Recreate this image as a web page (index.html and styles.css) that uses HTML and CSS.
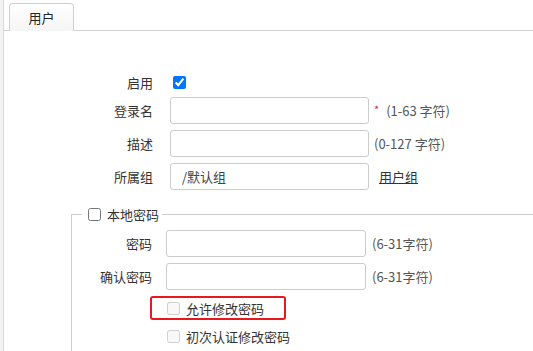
FILE: index.html
```html
<!DOCTYPE html>
<html>
<head>
    <title>用户</title>
    <link rel="stylesheet" href="styles.css">
</head>
<body>
    <div class="panel">
        <div class="tabs">
            <div class="tab">用户</div>
        </div>

        <form class="user-form">
            <div class="row check-row">
                <label class="lbl">启用</label>
                <input type="checkbox" class="chk" checked>
            </div>
            <div class="row">
                <label class="lbl">登录名</label>
                <input type="text" class="text">
                <span class="hint"><span class="req">*</span>(1-63 字符)</span>
            </div>
            <div class="row">
                <label class="lbl">描述</label>
                <input type="text" class="text">
                <span class="hint">(0-127 字符)</span>
            </div>
            <div class="row">
                <label class="lbl">所属组</label>
                <input type="text" class="text group" value="/默认组">
                <a class="link" href="#">用户组</a>
            </div>

            <fieldset class="local-pwd">
                <legend><input type="checkbox" class="chk">本地密码</legend>
                <div class="row">
                    <label class="lbl">密码</label>
                    <input type="password" class="text">
                    <span class="hint">(6-31字符)</span>
                </div>
                <div class="row">
                    <label class="lbl">确认密码</label>
                    <input type="password" class="text">
                    <span class="hint">(6-31字符)</span>
                </div>
                <div class="opt highlight">
                    <input type="checkbox" class="chk" disabled>
                    <span>允许修改密码</span>
                </div>
                <div class="opt">
                    <input type="checkbox" class="chk" disabled>
                    <span>初次认证修改密码</span>
                </div>
            </fieldset>
        </form>
    </div>
</body>
</html>
```

FILE: styles.css
```css
body {
    margin: 0;
    background-color: #f2f2f2;
    font-family: "Noto Sans CJK SC", "Liberation Sans", sans-serif;
    font-size: 13px;
    color: #333;
    overflow: hidden;
}

.panel {
    margin-left: 3px;
    border-left: 1px solid #d8d8d8;
    background-color: #fff;
    min-height: 351px;
}

/* onglets */
.tabs {
    display: flex;
    height: 27px;
    padding: 3px 0 0 5px;
    border-bottom: 1px solid #d3d3d3;
}

.tab {
    width: 65px;
    height: 28px;
    box-sizing: border-box;
    border: 1px solid #cfcfcf;
    border-bottom: none;
    border-radius: 4px 4px 0 0;
    background: linear-gradient(#ffffff, #f5f5f5);
    display: flex;
    align-items: center;
    justify-content: center;
    color: #222;
    line-height: 1;
}

/* formulaire */
.user-form {
    padding-top: 41px;
}

.row {
    display: flex;
    align-items: center;
    height: 27px;
    margin-bottom: 6px;
}

.check-row {
    height: 20px;
    margin-bottom: 5px;
}

.lbl {
    width: 149px;
    margin-right: 17px;
    text-align: right;
    line-height: 1;
}

.chk {
    width: 13px;
    height: 13px;
    margin: 0 0 0 3px;
}

.text {
    width: 199px;
    height: 27px;
    box-sizing: border-box;
    border: 1px solid #ccc;
    border-radius: 3px;
    padding: 0 11px;
    margin: 0;
    font-family: inherit;
    font-size: 13px;
    color: #444;
    outline: none;
}

.hint {
    margin-left: 5px;
    color: #555;
    line-height: 1;
}

.req {
    color: #e0242b;
    font-size: 11px;
    margin-right: 7px;
    vertical-align: 2px;
}

.link {
    margin-left: 10px;
    color: #333;
    text-decoration: underline;
    line-height: 1;
}

/* mot de passe local */
.local-pwd {
    margin: 14px -20px 0 67px;
    padding: 6px 0 30px 10px;
    border: 1px solid #cccccc;
}

.local-pwd legend {
    display: flex;
    align-items: center;
    height: 20px;
    padding: 0 3px 0 2px;
    line-height: 1;
}

.local-pwd legend .chk {
    margin: 0 6px 0 4px;
}

.local-pwd .lbl {
    width: 70px;
    margin-right: 14px;
}

.local-pwd .text {
    width: 200px;
}

.local-pwd .hint {
    margin-left: 6px;
}

.opt {
    display: flex;
    align-items: center;
    width: fit-content;
    height: 24px;
    box-sizing: border-box;
    margin: 4px 0 0 68px;
    padding: 0 20px 0 15px;
    border: 2px solid transparent;
    border-radius: 3px;
    line-height: 1;
}

.opt .chk {
    margin: 0 6px 0 0;
}

.highlight {
    border-color: #e8191d;
}
```
